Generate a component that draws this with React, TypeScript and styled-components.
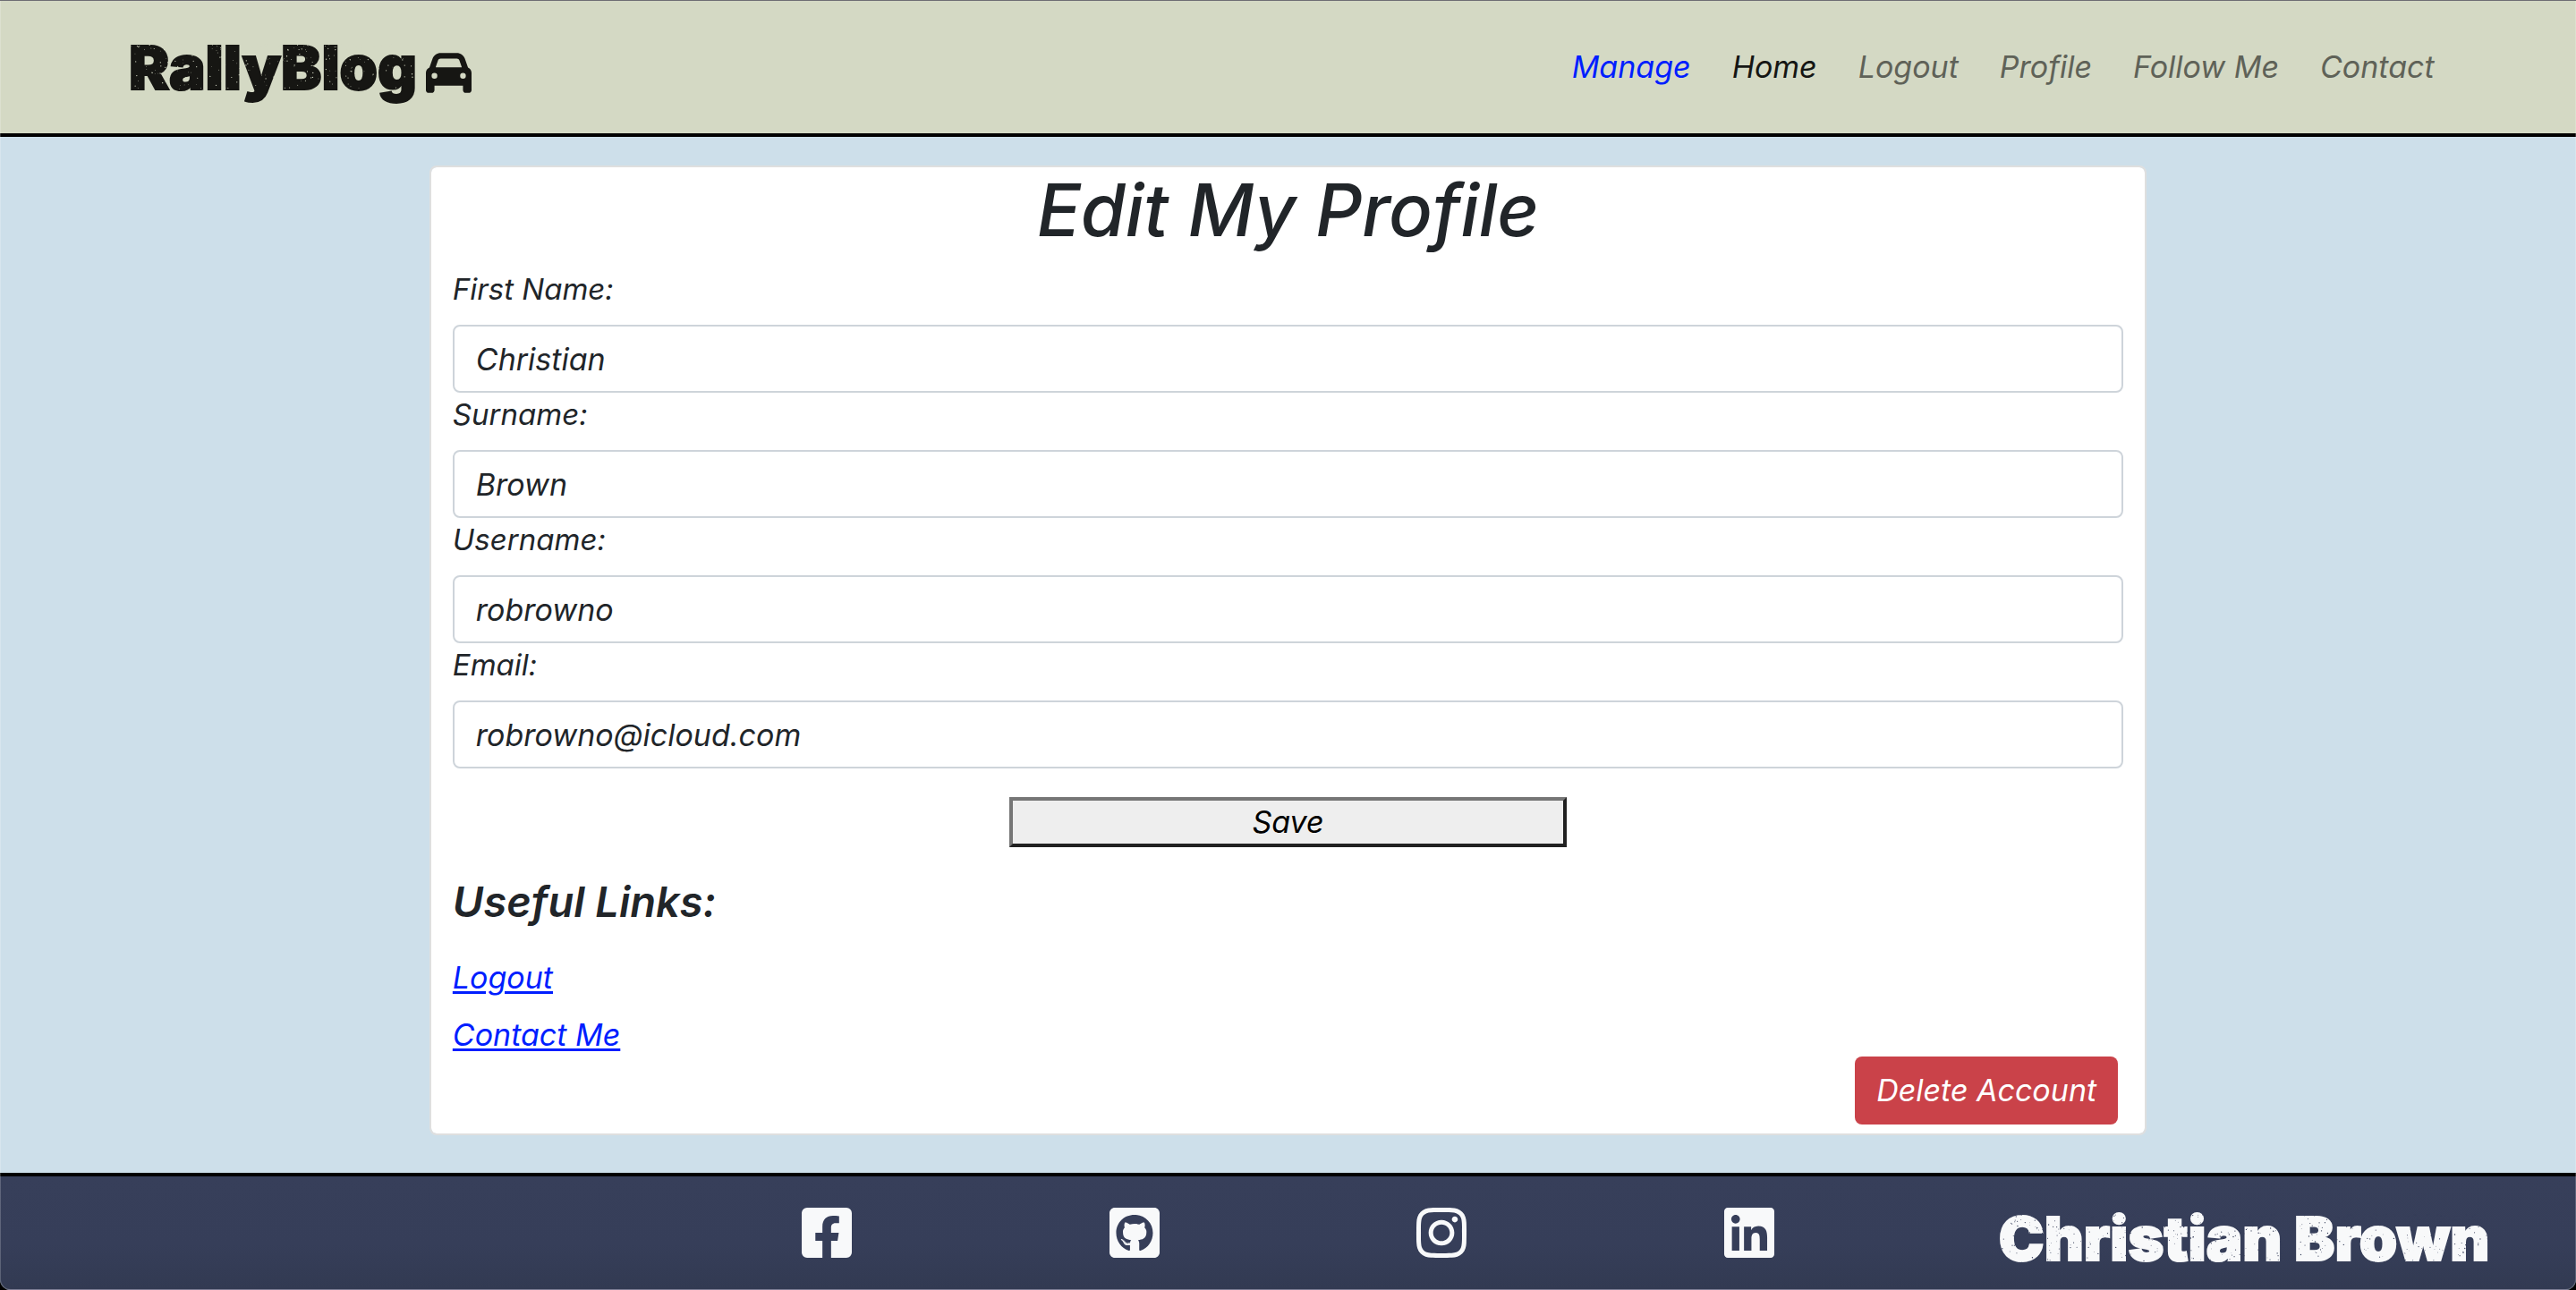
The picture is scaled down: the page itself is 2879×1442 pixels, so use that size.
import React from 'react';
import styled, { createGlobalStyle } from 'styled-components';
import { FaCar } from 'react-icons/fa6';
import { FaFacebookSquare, FaGithubSquare, FaInstagram, FaLinkedin } from 'react-icons/fa';

const GlobalStyle = createGlobalStyle`
  *, *::before, *::after { box-sizing: border-box; }
  body {
    margin: 0;
    background: #000;
    color: #212529;
    font-family: Inter, "Open Sans", sans-serif;
    font-size: 34px;
    font-style: italic;
    line-height: 48px;
  }
  h1, h2, p, ul { margin: 0; padding: 0; }
`;

const Page = styled.div`
  position: relative;
  display: flex;
  flex-direction: column;
  min-height: 100vh;
  background: #cddfea;
  border-radius: 0 0 12px 12px;
  overflow: hidden;

  &::after {
    content: "";
    position: absolute;
    inset: 0;
    border-radius: inherit;
    box-shadow: inset 0 0 0 1px rgba(255, 255, 255, 0.2);
    pointer-events: none;
  }
`;

const Header = styled.header`
  display: flex;
  align-items: center;
  justify-content: space-between;
  height: 153px;
  padding: 0 5.5% 0 5%;
  background: #d4d9c4;
  border-top: 1px solid #4a4950;
  border-bottom: 4px solid #000;
`;

const Brand = styled.a`
  display: flex;
  align-items: center;
  gap: 10px;
  color: #161613;
  text-decoration: none;

  > svg {
    margin-top: 12px;
  }
`;

const Wordmark = styled.span`
  position: relative;
  font-size: 68px;
  line-height: 80px;
  font-weight: 900;
  font-style: normal;
  white-space: nowrap;
  -webkit-text-stroke: 2px currentColor;
`;

const Grit = styled.svg`
  position: absolute;
  inset: 0;
  width: 100%;
  height: 100%;
`;

const Nav = styled.nav`
  display: flex;
  gap: 46px;
`;

const NavLink = styled.a<{ $tone: string }>`
  color: ${(p) => p.$tone};
  text-decoration: none;
  white-space: nowrap;
`;

const Main = styled.main`
  flex: 1;
  display: flex;
  justify-content: center;
  align-items: flex-start;
  padding: 32px 0 40px;
`;

const Card = styled.section`
  display: flex;
  flex-direction: column;
  width: 66.6667%;
  padding: 0 24px 10px;
  background: #fff;
  background-clip: padding-box;
  border: 2px solid #dfdfdf;
  border-radius: 8px;
`;

const Title = styled.h1`
  margin-bottom: 16px;
  font-size: 81px;
  line-height: 96px;
  font-weight: 500;
  text-align: center;
`;

const Form = styled.form`
  display: flex;
  flex-direction: column;
`;

const Label = styled.label`
  margin-bottom: 16px;
  font-size: 33px;
`;

const TextInput = styled.input`
  width: 100%;
  height: 76px;
  padding: 12px 24px;
  color: #212529;
  font: inherit;
  background: #fff;
  border: 2px solid #ced4da;
  border-radius: 8px;
`;

const SaveButton = styled.button`
  align-self: center;
  width: 33.3333%;
  margin: 32px 0;
  padding: 0;
  color: #000;
  font: inherit;
  background: #eee;
  border: 4px solid;
  border-color: #767676 #212121 #212121 #767676;
`;

const LinksTitle = styled.h2`
  margin-bottom: 32px;
  font-size: 47px;
  line-height: 58px;
  font-weight: 600;
`;

const Links = styled.div`
  display: flex;
  flex-direction: column;
  align-items: flex-start;
  gap: 16px;
`;

const TextLink = styled.a`
  color: #001eff;
  text-decoration: underline;
  text-decoration-thickness: 3px;
  text-underline-offset: 3px;
`;

const DeleteButton = styled.button`
  align-self: flex-end;
  height: 76px;
  margin-right: 6px;
  padding: 0 24px;
  color: #fff;
  font: inherit;
  background: #ca4249;
  border: 0;
  border-radius: 8px;
`;

const Footer = styled.footer`
  display: grid;
  grid-template-columns: 1fr 2fr 1fr;
  align-items: center;
  height: 131px;
  color: #f8f9fa;
  background: linear-gradient(#373f5a 0%, #363e59 60%, #323a52 100%);
  border-top: 4px solid #000;
  border-bottom: 1px solid #5a5c78;
`;

const SocialList = styled.ul`
  grid-column: 2;
  display: flex;
  padding: 0 32px;
  list-style: none;
`;

const SocialItem = styled.li`
  flex: 1;
  display: flex;
  justify-content: center;
`;

const SocialLink = styled.a`
  display: flex;
  color: #f8f9fa;
`;

const Owner = styled.p`
  justify-self: center;
  padding: 12px 22px 0 0;
`;

function seeded(seed: number) {
  let s = seed;
  return () => {
    s = (s * 16807) % 2147483647;
    return s / 2147483647;
  };
}

/* Worn-ink lettering: small flecks in the backdrop colour lie over the glyphs. */
function DirtText({ children, fleck, width }: { children: string; fleck: string; width: number }) {
  const rand = seeded(width);
  const flecks = Array.from({ length: width }, () => ({
    x: rand() * width,
    y: 14 + Math.pow(rand(), 1.5) * 54,
    r: 0.3 + rand() * 0.4,
  }));
  return (
    <Wordmark>
      {children}
      <Grit aria-hidden="true" viewBox={`0 0 ${width} 80`} preserveAspectRatio="none">
        {flecks.map((f, i) => (
          <circle key={i} cx={f.x} cy={f.y} r={f.r} fill={fleck} />
        ))}
      </Grit>
    </Wordmark>
  );
}

const navItems = [
  { label: 'Manage', tone: '#001eff' },
  { label: 'Home', tone: '#151614' },
  { label: 'Logout', tone: '#5f6258' },
  { label: 'Profile', tone: '#5f6258' },
  { label: 'Follow Me', tone: '#5f6258' },
  { label: 'Contact', tone: '#5f6258' },
];

const fields = [
  { id: 'first-name', label: 'First Name:', value: 'Christian', type: 'text' },
  { id: 'surname', label: 'Surname:', value: 'Brown', type: 'text' },
  { id: 'username', label: 'Username:', value: 'robrowno', type: 'text' },
  { id: 'email', label: 'Email:', value: 'robrowno@icloud.com', type: 'email' },
];

const socials = [
  { name: 'Facebook', Icon: FaFacebookSquare },
  { name: 'GitHub', Icon: FaGithubSquare },
  { name: 'Instagram', Icon: FaInstagram },
  { name: 'LinkedIn', Icon: FaLinkedin },
];

export default function App() {
  return (
    <>
      <GlobalStyle />
      <Page>
        <Header>
          <Brand href="#home">
            <DirtText fleck="#d4d9c4" width={320}>RallyBlog</DirtText>
            <FaCar size={51} aria-hidden="true" />
          </Brand>
          <Nav aria-label="Main">
            {navItems.map((item) => (
              <NavLink key={item.label} href="#" $tone={item.tone}>
                {item.label}
              </NavLink>
            ))}
          </Nav>
        </Header>
        <Main>
          <Card>
            <Title>Edit My Profile</Title>
            <Form onSubmit={(e) => e.preventDefault()}>
              {fields.map((f) => (
                <React.Fragment key={f.id}>
                  <Label htmlFor={f.id}>{f.label}</Label>
                  <TextInput id={f.id} type={f.type} defaultValue={f.value} />
                </React.Fragment>
              ))}
              <SaveButton type="submit">Save</SaveButton>
            </Form>
            <LinksTitle>Useful Links:</LinksTitle>
            <Links>
              <TextLink href="#logout">Logout</TextLink>
              <TextLink href="#contact">Contact Me</TextLink>
            </Links>
            <DeleteButton type="button">Delete Account</DeleteButton>
          </Card>
        </Main>
        <Footer>
          <SocialList>
            {socials.map(({ name, Icon }) => (
              <SocialItem key={name}>
                <SocialLink href="#" aria-label={name}>
                  <Icon size={64} />
                </SocialLink>
              </SocialItem>
            ))}
          </SocialList>
          <Owner>
            <DirtText fleck="#363e59" width={550}>Christian Brown</DirtText>
          </Owner>
        </Footer>
      </Page>
    </>
  );
}
